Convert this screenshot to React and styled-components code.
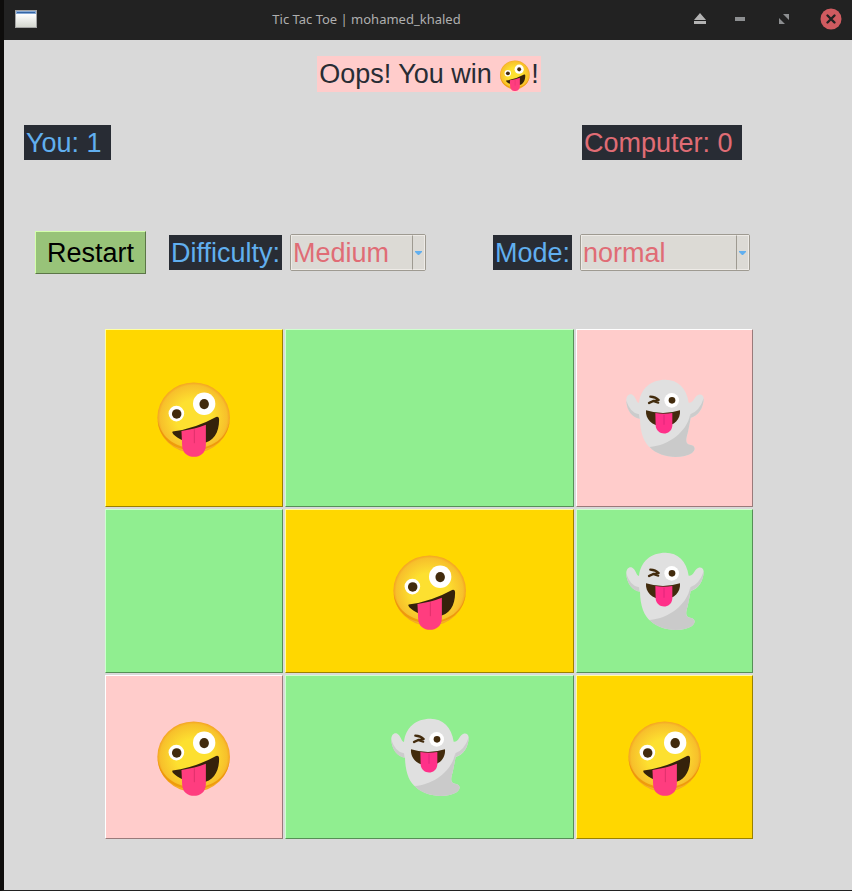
import React, { useState } from "react";
import styled, { createGlobalStyle } from "styled-components";

const GlobalStyle = createGlobalStyle`
  *, *::before, *::after { box-sizing: border-box; }
  body { margin: 0; background: #d9d9d9; }
  button, select { font: inherit; }
`;

const Window = styled.div`
  min-height: 100vh;
  display: flex;
  flex-direction: column;
  border-left: 4px solid #0e0d0c;
  border-bottom: 1px solid #222222;
  background: #d9d9d9;
  font: 27px/31px "Liberation Sans", Arial, sans-serif;
`;

const TitleBar = styled.header`
  height: 40px;
  display: flex;
  align-items: center;
  padding: 0 10px 2px 11px;
  background: #222222;
`;

const AppIcon = styled.svg`
  width: 22px;
  height: 18px;
  margin-right: 4px;
  flex: none;
`;

const WindowTitle = styled.div`
  flex: 1;
  text-align: center;
  color: #afafaf;
  font: 13px/18px "Noto Sans", sans-serif;
`;

const WindowControls = styled.div`
  display: flex;
  align-items: center;
  gap: 24px;
`;

const WindowButton = styled.button`
  width: ${(p) => p.$width}px;
  height: 22px;
  padding: 0;
  border: 0;
  background: none;
  display: flex;
  align-items: center;
  justify-content: center;
`;

const Content = styled.main`
  flex: 1;
  display: flex;
  flex-direction: column;
  padding: 16px 20px 20px;
`;

const Tag = styled.span`
  padding: 3px 2px 1px;
  white-space: pre;
  background: ${(p) => p.$bg || "#282c34"};
  color: ${(p) => p.$color};
`;

const Status = styled(Tag).attrs({ as: "h1" })`
  margin: 0 0 0 2px;
  align-self: center;
  display: flex;
  height: 36px;
  font-size: 27px;
  font-weight: 400;
`;

const Scores = styled.section`
  margin-top: 33px;
  padding-right: 90px;
  display: flex;
  justify-content: space-between;
`;

const Controls = styled.section`
  margin-top: 71px;
  padding: 0 82px 0 11px;
  display: flex;
  align-items: center;
  justify-content: space-between;
`;

const ControlGroup = styled.div`
  display: flex;
  align-items: center;
  gap: ${(p) => p.$gap}px;
`;

const RestartButton = styled.button`
  height: 43px;
  padding: 2px 11px 0;
  border: 1px solid;
  border-color: #d5ffac #5c7648 #5c7648 #d5ffac;
  background: #98c379;
  color: #000000;
`;

const SelectBox = styled.span`
  position: relative;
  display: flex;
  width: ${(p) => p.$width}px;
  height: 37px;
  border: 1px solid #9e9a91;
  border-radius: 2px;
  background: #dcdad5;
`;

const Select = styled.select`
  appearance: none;
  width: 100%;
  padding: 2px 14px 0 1px;
  border: 1px solid #eeebe7;
  border-radius: 0;
  background: transparent;
  color: #e06c75;
`;

const SelectArrow = styled.span`
  position: absolute;
  inset: 0 0 0 auto;
  width: 13px;
  display: flex;
  align-items: center;
  justify-content: center;
  border: 1px solid #eeebe7;
  border-left-color: #9e9a91;
  pointer-events: none;
`;

const Board = styled.section`
  align-self: center;
  width: 100%;
  max-width: 648px;
  margin: 55px 0 0 2px;
  display: grid;
  grid-template-columns: 178fr 289fr 177fr;
  grid-template-rows: 178px 164px 164px;
  gap: 2px;
`;

const shades = {
  gold: ["#ffd700", "#ffffa0", "#9a8100"],
  green: ["#90ee90", "#cfffcf", "#568f56"],
  pink: ["#ffcccb", "#ffffff", "#997a7a"],
};

const Cell = styled.button`
  min-width: 0;
  padding: 0;
  display: flex;
  align-items: center;
  justify-content: center;
  border: 1px solid;
  border-color: ${(p) => {
    const [, light, dark] = shades[p.$tone];
    return `${light} ${dark} ${dark} ${light}`;
  }};
  background: ${(p) => shades[p.$tone][0]};
`;

const EmojiSvg = styled.svg`
  flex: none;
  width: ${(p) => p.$size}px;
  height: ${(p) => p.$size}px;
`;

function ZanyFace({ size }) {
  return (
    <EmojiSvg $size={size} viewBox="46 44 230 230" role="img" aria-label="zany face">
      <defs>
        <radialGradient id="face" cx="50%" cy="50%" r="50%">
          <stop offset="0.5" stopColor="#fde030" />
          <stop offset="0.92" stopColor="#f7c02b" />
          <stop offset="1" stopColor="#f4a223" />
        </radialGradient>
      </defs>
      <ellipse cx="160" cy="158" rx="107" ry="104" fill="url(#face)" />
      <path d="M54 165C60 285 260 285 266 165C254 276 72 276 54 165Z" fill="#eb8f00" opacity=".7" />
      <circle cx="109" cy="146" r="23" fill="#fff" />
      <circle cx="191" cy="117" r="33" fill="#fff" />
      <ellipse cx="110" cy="147" rx="14" ry="14" fill="#422b0d" />
      <ellipse cx="191" cy="118" rx="14" ry="15" fill="#422b0d" />
      <path d="M98 199Q165 190 226 156Q235 153 235 165C235 202 218 231 184 234C145 237 116 222 100 207Q95 201 98 199Z" fill="#35220b" />
      <path d="M124 197Q164 192 196 179V239C196 285 126 285 126 239Z" fill="#ff3d7f" />
      <path d="M162 194V232" stroke="#e0306c" strokeWidth="3" strokeLinecap="round" />
    </EmojiSvg>
  );
}

function Ghost() {
  return (
    <EmojiSvg $size={80} viewBox="44 38 240 240" role="img" aria-label="ghost">
      <path
        d="M86 113C77 110 77 94 66 88C57 83 47 91 48 106C49 134 66 156 89 160C90 203 101 233 122 249C154 279 214 282 245 263C258 253 254 239 239 238C226 236 225 226 232 204L241 158C264 153 280 127 280 99C279 86 266 84 258 93C249 102 249 113 235 112C229 68 202 43 166 43C121 43 91 69 86 113Z"
        fill="#e0e0e0"
      />
      <path
        d="M118 245C176 241 229 199 239 150L241 158L232 204C225 226 226 236 239 238C254 239 258 253 245 263C214 282 148 279 118 245Z"
        fill="#cacaca"
      />
      <path d="M88 160C65 156 49 135 48 106Q60 143 86 147Z" fill="#cccccc" />
      <path d="M280 99C280 127 264 153 239 158L240 147Q268 137 280 99Z" fill="#cccccc" />
      <path
        d="M120 94Q136 95 145 104Q129 105 116 113"
        fill="none"
        stroke="#422b0d"
        strokeWidth="7"
        strokeLinecap="round"
        strokeLinejoin="round"
      />
      <path d="M130 108L144 112" stroke="#422b0d" strokeWidth="6" strokeLinecap="round" />
      <circle cx="184" cy="105" r="22" fill="#fff" />
      <circle cx="185" cy="105" r="10" fill="#422b0d" />
      <path d="M107 135Q158 151 209 135C211 161 193 183 159 183C124 183 105 161 107 135Z" fill="#422b0d" />
      <path d="M135 143Q160 148 186 143V181C183 212 140 212 136 182Z" fill="#ff3089" />
      <path d="M161 150V177" stroke="#e0257a" strokeWidth="3" strokeLinecap="round" />
    </EmojiSvg>
  );
}

function Dropdown({ id, width, value, options, onChange }) {
  return (
    <SelectBox $width={width}>
      <Select id={id} value={value} onChange={(e) => onChange(e.target.value)}>
        {options.map((option) => (
          <option key={option}>{option}</option>
        ))}
      </Select>
      <SelectArrow aria-hidden="true">
        <svg width="7" height="4" viewBox="0 0 7 4">
          <path d="M0 0H7V1L4 4H3L0 1Z" fill="#61afef" />
        </svg>
      </SelectArrow>
    </SelectBox>
  );
}

const cells = [
  ["gold", "you"],
  ["green", ""],
  ["pink", "computer"],
  ["green", ""],
  ["gold", "you"],
  ["green", "computer"],
  ["pink", "you"],
  ["green", "computer"],
  ["gold", "you"],
];

export default function App() {
  const [difficulty, setDifficulty] = useState("Medium");
  const [mode, setMode] = useState("normal");

  return (
    <Window>
      <GlobalStyle />
      <TitleBar>
        <AppIcon viewBox="0 0 22 18" aria-hidden="true">
          <defs>
            <linearGradient id="pane" x2="0" y2="1">
              <stop stopColor="#ffffff" />
              <stop offset="1" stopColor="#d5d8d0" />
            </linearGradient>
          </defs>
          <path d="M0 0H22V18H0Z" fill="#a4a4a4" />
          <path d="M1 1H21V4H1Z" fill="#86a9d6" />
          <path d="M2 2H20V3H2Z" fill="#3465a4" />
          <path d="M1 4H21V17H1Z" fill="url(#pane)" />
        </AppIcon>
        <WindowTitle>Tic Tac Toe | mohamed_khaled</WindowTitle>
        <WindowControls>
          <WindowButton $width={16} aria-label="Keep above">
            <svg width="14" height="12" viewBox="0 0 14 12" fill="#b3b3b3">
              <path d="M7 0L13 7H1ZM1 8H13V11H1Z" />
            </svg>
          </WindowButton>
          <WindowButton $width={16} aria-label="Minimize">
            <svg width="10" height="4" viewBox="0 0 10 4">
              <path d="M0 0H10V4H0Z" fill="#8d8f91" />
            </svg>
          </WindowButton>
          <WindowButton $width={24} aria-label="Restore">
            <svg width="10" height="10" viewBox="0 0 10 10" fill="#8d8f91">
              <path d="M4 0H10V6ZM0 4L6 10H0Z" />
            </svg>
          </WindowButton>
          <WindowButton $width={22} aria-label="Close">
            <svg width="22" height="22" viewBox="0 0 22 22">
              <circle cx="11" cy="11" r="10.5" fill="#cf5b60" />
              <path d="M7.5 7.5L14.5 14.5M14.5 7.5L7.5 14.5" stroke="#222" strokeWidth="2.4" strokeLinecap="round" />
            </svg>
          </WindowButton>
        </WindowControls>
      </TitleBar>
      <Content>
        <Status $bg="#ffcccb" $color="#282c34">
          {"Oops! You win "}
          <ZanyFace size={32} />!
        </Status>
        <Scores>
          <Tag $color="#61afef">{"You: 1 "}</Tag>
          <Tag $color="#e06c75">{"Computer: 0 "}</Tag>
        </Scores>
        <Controls>
          <ControlGroup $gap={23}>
            <RestartButton>Restart</RestartButton>
            <ControlGroup $gap={8}>
              <Tag as="label" htmlFor="difficulty" $color="#61afef">Difficulty:</Tag>
              <Dropdown
                id="difficulty"
                width={136}
                value={difficulty}
                options={["Easy", "Medium", "Hard"]}
                onChange={setDifficulty}
              />
            </ControlGroup>
          </ControlGroup>
          <ControlGroup $gap={8}>
            <Tag as="label" htmlFor="mode" $color="#61afef">Mode:</Tag>
            <Dropdown
              id="mode"
              width={170}
              value={mode}
              options={["normal", "reverse"]}
              onChange={setMode}
            />
          </ControlGroup>
        </Controls>
        <Board aria-label="Board">
          {cells.map(([tone, owner], i) => (
            <Cell key={i} $tone={tone} aria-label={`Square ${i + 1}`}>
              {owner === "you" && <ZanyFace size={78} />}
              {owner === "computer" && <Ghost />}
            </Cell>
          ))}
        </Board>
      </Content>
    </Window>
  );
}
